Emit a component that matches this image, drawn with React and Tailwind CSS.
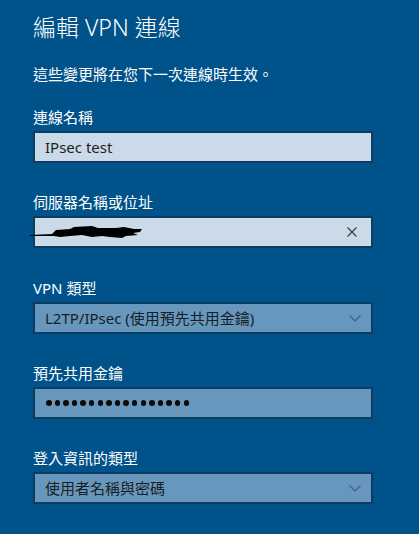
import { useState } from 'react';

const font = { fontFamily: '"Noto Sans", "Noto Sans CJK TC", sans-serif' };

function Chevron() {
  return (
    <svg width="12" height="7" viewBox="0 0 12 7" className="shrink-0">
      <path d="M0.5 0.5 L6 6 L11.5 0.5" fill="none" stroke="#3f5f7c" strokeWidth="1.1" />
    </svg>
  );
}

function Field({ label, className = '', children }) {
  return (
    <div className={className}>
      <div className="text-[15px] leading-[20px] text-white">{label}</div>
      <div className="mt-[4px]">{children}</div>
    </div>
  );
}

function Scribble() {
  // redaction marker scrawl over the server name
  return (
    <svg
      width="116"
      height="18"
      viewBox="0 0 116 18"
      className="absolute left-[-5px] top-[5px]"
    >
      <path
        d="M0 12 L22 11 L26 7 L40 6 L44 4 L62 3 L68 5 L86 5 L94 4 L104 6 L112 6 L110 9 L103 10 L108 12 L96 13 L92 15 L80 14 L72 13 L62 14 L52 12 L40 13 L30 14 L24 13 L0 13 Z"
        fill="#000"
      />
      <path d="M28 9 L60 8 L84 9 L100 8" stroke="#000" strokeWidth="3" fill="none" />
    </svg>
  );
}

export default function App() {
  const [name] = useState('IPsec test');

  return (
    <div className="w-[419px] h-[534px] bg-[#00528a] overflow-hidden" style={font}>
      <div className="pl-[33px] w-[373px]">
        <h1 className="pt-[12px] text-[23px] leading-[30px] font-light text-white">編輯 VPN 連線</h1>
        <p className="mt-[22px] text-[15px] leading-[20px] text-white">這些變更將在您下一次連線時生效。</p>

        <Field label="連線名稱" className="mt-[23px]">
          <div className="h-[32px] border-2 border-[#0c3c62] bg-[#cbdae8] flex items-center pl-[10px] text-[15px] text-[#1e1e1e]">
            {name}
          </div>
        </Field>

        <Field label="伺服器名稱或位址" className="mt-[29px]">
          <div className="relative h-[32px] border-2 border-[#0c3c62] bg-[#cbdae8] flex items-center justify-end pr-[14px]">
            <Scribble />
            <svg width="10" height="10" viewBox="0 0 10 10">
              <path d="M0.5 0.5 L9.5 9.5 M9.5 0.5 L0.5 9.5" stroke="#3a3a3a" strokeWidth="1.1" />
            </svg>
          </div>
        </Field>

        <Field label="VPN 類型" className="mt-[30px]">
          <div className="h-[32px] border-2 border-[#0c3c62] bg-[#6897bd] flex items-center justify-between pl-[10px] pr-[10px] text-[15px] text-[#161e26]">
            <span>L2TP/IPsec (使用預先共用金鑰)</span>
            <Chevron />
          </div>
        </Field>

        <Field label="預先共用金鑰" className="mt-[29px]">
          <div className="h-[32px] border-2 border-[#0c3c62] bg-[#6897bd] flex items-center pl-[11px] gap-[3.1px]">
            {Array.from({ length: 17 }).map((_, i) => (
              <span key={i} className="w-[5.5px] h-[5.5px] rounded-full bg-[#0a0a0a]" />
            ))}
          </div>
        </Field>

        <Field label="登入資訊的類型" className="mt-[29px]">
          <div className="h-[32px] border-2 border-[#0c3c62] bg-[#6897bd] flex items-center justify-between pl-[10px] pr-[10px] text-[15px] text-[#161e26]">
            <span>使用者名稱與密碼</span>
            <Chevron />
          </div>
        </Field>
      </div>
    </div>
  );
}
